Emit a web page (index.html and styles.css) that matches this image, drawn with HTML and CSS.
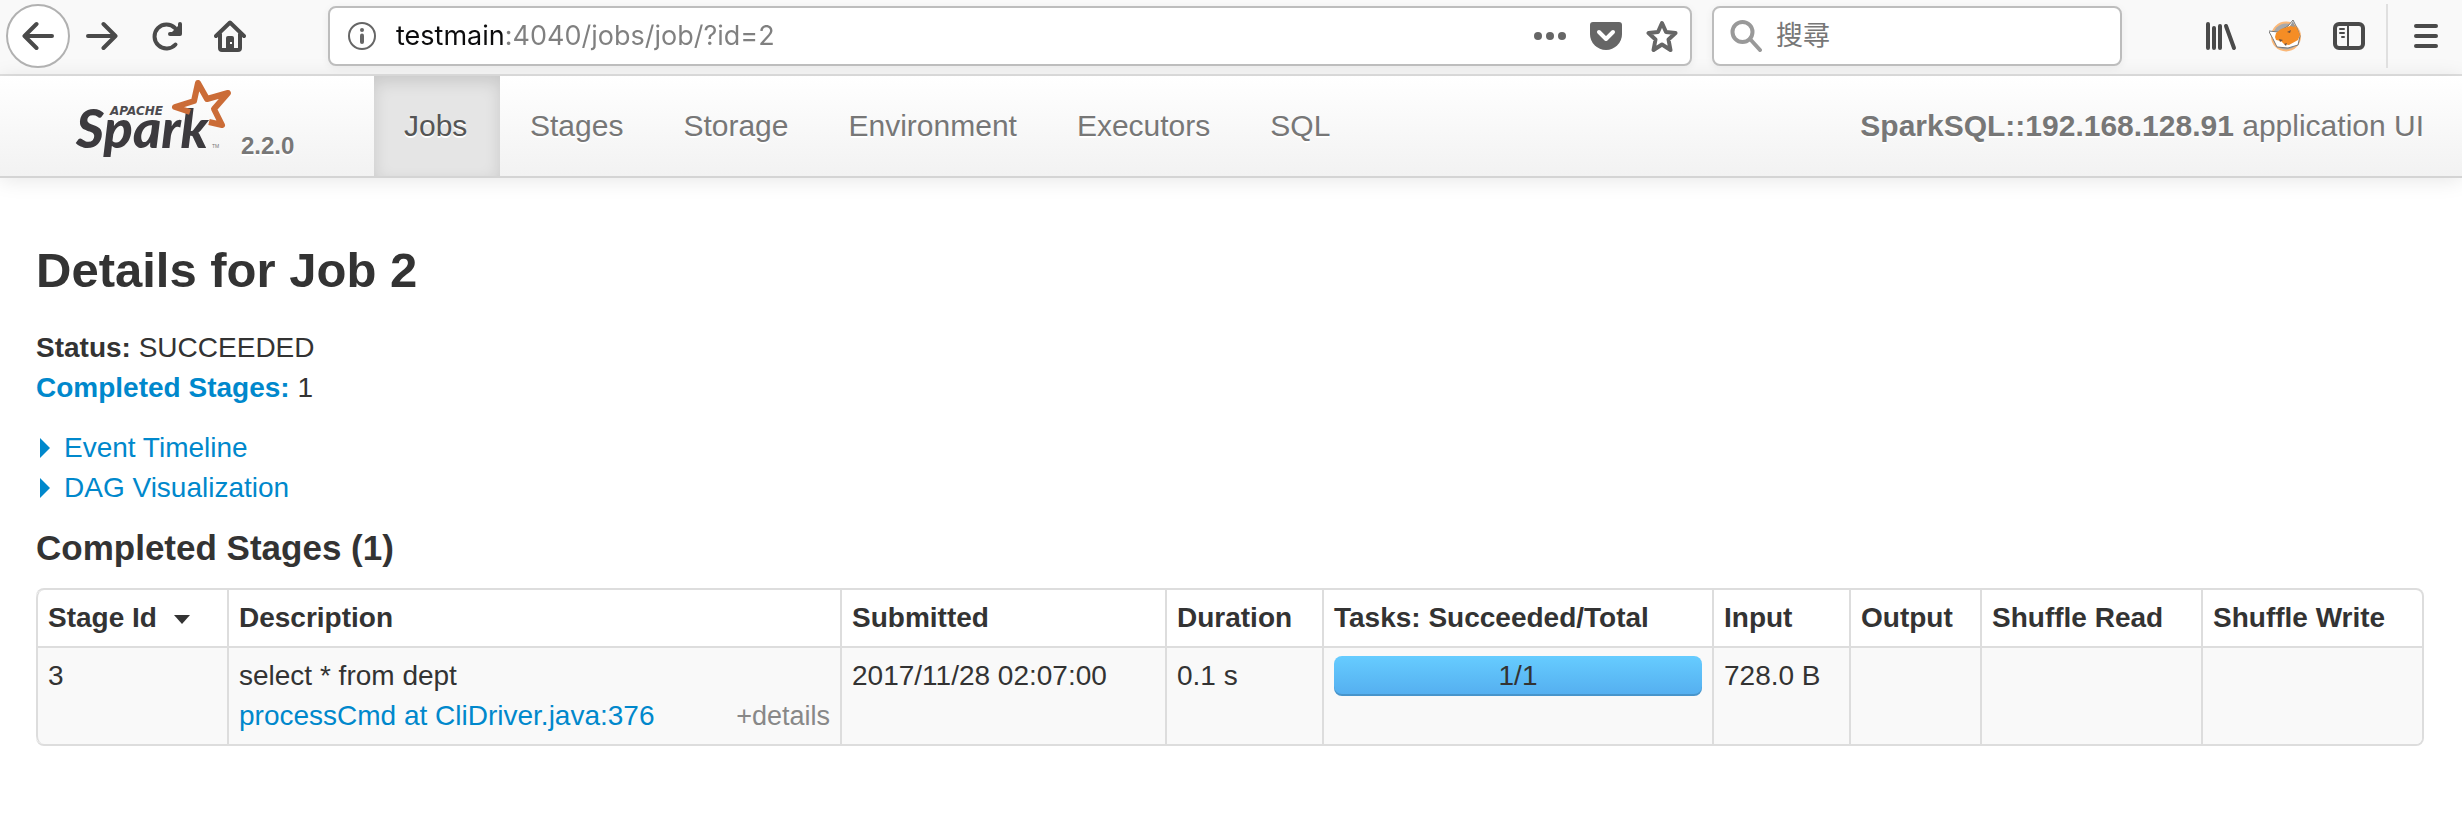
FILE: index.html
```html
<!DOCTYPE html>
<html lang="en">
<head>
<meta charset="utf-8">
<title>Details for Job 2</title>
<link rel="stylesheet" href="styles.css">
</head>
<body>
<header class="toolbar">
  <div class="tool-group">
    <button class="tool back" aria-label="Back"><svg class="icon" viewBox="0 0 32 32"><path d="M14.500 4 2.500 16l12 12M3 16h27"/></svg></button>
    <button class="tool" aria-label="Forward"><svg class="icon" viewBox="0 0 32 32"><path d="M17.500 4l12 12-12 12M29 16H2"/></svg></button>
    <button class="tool" aria-label="Reload"><svg class="icon" viewBox="0 0 32 32"><path d="M25.500 24.500A12 12 0 1 1 25 8"/><path d="M30 4v10H20z" fill="currentColor" stroke="none"/><path d="M30 4v10H20"/></svg></button>
    <button class="tool" aria-label="Home"><svg class="icon" viewBox="0 0 32 32"><path d="M2 16 16 2.500 30 16M6 14v14q0 2 2 2h16q2 0 2-2V14"/><path d="M12 29V18q0-2 2-2h4q2 0 2 2v11z" fill="currentColor" stroke="none"/><path d="M16 22h2v2h-2z" fill="#fff" stroke="none"/></svg></button>
  </div>
  <div class="field address">
    <svg class="icon info" viewBox="0 0 32 32"><circle cx="16" cy="16" r="13" stroke-width="2"/><path d="M16 15.500v6.500"/><circle cx="16" cy="10" r="2" fill="currentColor" stroke="none"/></svg>
    <input class="field-input url" type="text" aria-label="Address" value="testmain:4040/jobs/job/?id=2">
    <button class="mini" aria-label="Page actions"><svg class="icon" viewBox="0 0 32 32"><g fill="currentColor" stroke="none"><circle cx="4" cy="16" r="4"/><circle cx="16" cy="16" r="4"/><circle cx="28" cy="16" r="4"/></g></svg></button>
    <button class="mini" aria-label="Save to Pocket"><svg class="icon" viewBox="0 0 32 32"><path d="M3 2h26q3 0 3 3v9a16 16 0 0 1-32 0V5q0-3 3-3z" fill="currentColor" stroke="none"/><path d="M9 12l7 7 7-7" stroke="#fff"/></svg></button>
    <button class="mini" aria-label="Bookmark"><svg class="icon" viewBox="0 0 32 32"><path d="M16 3l4 9 9.500 1-7 6.500 2 10.500-8.500-5.500L7.500 30l2-10.500-7-6.500 9.500-1z"/></svg></button>
  </div>
  <div class="field search">
    <svg class="icon lens" viewBox="0 0 32 32"><circle cx="12.500" cy="12" r="10"/><path d="M20 19l10 11"/></svg>
    <input class="field-input" type="text" aria-label="搜尋" placeholder="搜尋">
  </div>
  <div class="tool-group">
    <button class="tool" aria-label="Library"><svg class="icon" viewBox="0 0 32 32"><path d="M3 4v24M9 8v20M15 6v22M21 6l8 22"/></svg></button>
    <button class="tool" aria-label="Fox extension"><svg class="icon" viewBox="0 0 32 32"><g stroke="none"><circle cx="17" cy="16.500" r="15" fill="#fbb878"/><circle cx="17" cy="16.500" r="13" fill="#a9a9a9"/><path d="M0 11l9 1 10-6 5-6 4 8 3 8-2 9-10 3-11-1-4-8z" fill="#fff" stroke="#777" stroke-width="1"/><path d="M7 13l5-4 9-3 4-2 3 4 3 7-2 5-9 5-5-1-3-3-5-1-1-3z" fill="#f58d25"/><path d="M10 19l4 1-3 2zM18 12l4-2-1 3zM15 24l3-1-1 3z" fill="#6b5040"/><path d="M21 6l3-5 2 6z" fill="#999"/></g></svg></button>
    <button class="tool" aria-label="Sidebars"><svg class="icon" viewBox="0 0 32 32"><rect x="2" y="4" width="28" height="24" rx="4"/><path d="M15 4v24M7 9h4M7 13h4M9 17h2" stroke-width="2"/></svg></button>
  </div>
  <div class="menu-wrap">
    <button class="tool" aria-label="Menu"><svg class="icon" viewBox="0 0 32 32"><path d="M6 6h20M6 16h20M6 26h20"/></svg></button>
  </div>
</header>

<nav class="navbar">
  <a class="brand" href="#">
    <svg class="logo" viewBox="0 0 160 84" role="img" aria-label="Apache Spark">
      <text class="logo-word" x="2" y="70">Spark</text>
      <text class="logo-apache" x="36" y="37">APACHE</text>
      <text class="logo-tm" x="138" y="70">TM</text>
      <path class="logo-star" d="M116 34l-15-5 19-6 4-18 9 16 21-6-14 16 8 16-13-3"/>
    </svg>
    <span class="version">2.2.0</span>
  </a>
  <ul class="tabs">
    <li><a class="tab active" href="#">Jobs</a></li>
    <li><a class="tab" href="#">Stages</a></li>
    <li><a class="tab" href="#">Storage</a></li>
    <li><a class="tab" href="#">Environment</a></li>
    <li><a class="tab" href="#">Executors</a></li>
    <li><a class="tab" href="#">SQL</a></li>
  </ul>
  <p class="app-name"><strong>SparkSQL::192.168.128.91</strong> application UI</p>
</nav>

<main class="content">
  <h1 class="title">Details for Job 2</h1>
  <ul class="summary">
    <li><strong>Status:</strong> SUCCEEDED</li>
    <li><a href="#completed"><strong>Completed Stages:</strong></a> 1</li>
  </ul>
  <div class="expanders">
    <a class="expander" href="#">Event Timeline</a>
    <a class="expander" href="#">DAG Visualization</a>
  </div>
  <h2 class="subtitle" id="completed">Completed Stages (1)</h2>
  <table class="stages">
    <colgroup>
      <col class="c-id"><col><col class="c-submitted"><col class="c-duration"><col class="c-tasks"><col class="c-input"><col class="c-output"><col class="c-shuffle"><col class="c-shuffle">
    </colgroup>
    <thead>
      <tr><th class="sorted">Stage Id</th><th>Description</th><th>Submitted</th><th>Duration</th><th>Tasks: Succeeded/Total</th><th>Input</th><th>Output</th><th>Shuffle Read</th><th>Shuffle Write</th></tr>
    </thead>
    <tbody>
      <tr>
        <td>3</td>
        <td>select * from dept
          <div class="call"><a href="#">processCmd at CliDriver.java:376</a><button class="details">+details</button></div>
        </td>
        <td>2017/11/28 02:07:00</td>
        <td>0.1 s</td>
        <td><div class="progress">1/1</div></td>
        <td>728.0 B</td>
        <td></td>
        <td></td>
        <td></td>
      </tr>
    </tbody>
  </table>
</main>
</body>
</html>
```
FILE: styles.css
```css
* { box-sizing: border-box; }
body {
  margin: 0;
  background: #fff;
  color: #333;
  font: 28px/40px "Liberation Sans", Arial, sans-serif;
}
a { color: #08c; text-decoration: none; }
ul { margin: 0; padding: 0; list-style: none; }
button { padding: 0; border: 0; background: none; color: inherit; font: inherit; }

/* Browser toolbar */
.toolbar {
  display: flex;
  align-items: center;
  height: 76px;
  padding: 0 4px 2px 6px;
  background: #f9f9f9;
  border-bottom: 2px solid #e0e0e0;
  color: #4a4a4a;
}
.tool-group { display: flex; }
.tool {
  display: flex;
  align-items: center;
  justify-content: center;
  width: 64px;
  height: 64px;
}
.back { background: #fff; border: 2px solid #b1b1b1; border-radius: 50%; }
.icon {
  flex: none;
  width: 32px;
  height: 32px;
  fill: none;
  stroke: currentColor;
  stroke-width: 4;
  stroke-linecap: round;
  stroke-linejoin: round;
}
.field {
  display: flex;
  align-items: center;
  height: 60px;
  background: #fff;
  border: 2px solid #bdbdbd;
  border-radius: 8px;
  box-shadow: 0 2px 8px rgba(0, 0, 0, .06);
  color: #666;
}
.address { flex: 1; gap: 24px; margin-left: 66px; padding: 0 12px 0 16px; }
.search { width: 410px; margin: 0 67px 0 20px; padding: 0 16px; gap: 14px; }
.info { margin-right: -6px; }
.lens { color: #999; }
.mini { display: flex; color: #666; }
.field-input {
  flex: 1;
  min-width: 0;
  padding: 0;
  border: 0;
  outline: 0;
  background: none;
  font: 27px/40px Inter, "Noto Sans CJK TC", sans-serif;
}
.field-input::placeholder { color: #777; }
.url {
  color: transparent;
  background: linear-gradient(90deg, #0c0c0d 111px, #808080 111px);
  background-clip: text;
  -webkit-background-clip: text;
}
.menu-wrap { margin-left: 5px; padding-left: 6px; border-left: 2px solid #e0e0e0; }

/* Application navigation */
.navbar {
  display: flex;
  height: 102px;
  padding-right: 38px;
  background: linear-gradient(#fff, #f2f2f2);
  border-bottom: 2px solid #d4d4d4;
  box-shadow: 0 2px 20px rgba(0, 0, 0, .1);
  color: #777;
  font-size: 30px;
  text-shadow: 0 2px 0 #fff;
}
.brand { display: flex; width: 374px; padding-left: 74px; color: #777; }
.logo { width: 160px; height: 84px; margin-top: 2px; text-shadow: none; }
.logo-word { font: italic 900 54px Lato, sans-serif; fill: #3c3a3e; }
.logo-apache { font: italic bold 12px "DejaVu Sans", sans-serif; fill: #4c4a4e; }
.logo-tm { font: 5px "Liberation Sans", sans-serif; fill: #777; }
.logo-star {
  fill: none;
  stroke: #cb6c37;
  stroke-width: 6;
  stroke-linejoin: round;
}
.version { margin: 50px 0 0 7px; font-size: 24px; font-weight: bold; }
.tabs { display: flex; }
.tab { display: block; min-width: 126px; height: 100px; padding: 30px; color: #777; }
.active {
  background: #e5e5e5;
  box-shadow: inset 0 6px 16px rgba(0, 0, 0, .125);
  color: #555;
}
.app-name { margin: 0 0 0 auto; padding: 30px 0; }

/* Page content */
.content { padding: 52px 38px 40px 36px; }
.title { margin: 0 0 18px; font-size: 49px; line-height: 80px; }
.expanders { display: flex; flex-direction: column; align-items: flex-start; margin-top: 20px; }
.expander { display: flex; align-items: center; gap: 14px; padding-left: 4px; }
.expander::before {
  content: "";
  border: 10px solid transparent;
  border-left-color: currentColor;
  border-right-width: 0;
}
.subtitle { margin: 20px 0; font-size: 35px; line-height: 40px; }
.stages {
  width: 100%;
  table-layout: fixed;
  border: 2px solid #ddd;
  border-left: 0;
  border-radius: 8px;
  border-spacing: 0;
}
.c-id { width: 191px; }
.c-submitted { width: 325px; }
.c-duration { width: 157px; }
.c-tasks { width: 390px; }
.c-input { width: 137px; }
.c-output { width: 131px; }
.c-shuffle { width: 221px; }
th, td {
  padding: 8px 10px;
  border-left: 2px solid #ddd;
  text-align: left;
  vertical-align: top;
  white-space: nowrap;
}
td { background: #f9f9f9; border-top: 2px solid #ddd; }
th:first-child { border-top-left-radius: 8px; }
td:first-child { border-bottom-left-radius: 8px; }
td:last-child { border-bottom-right-radius: 6px; }
.sorted::after {
  content: "";
  display: inline-block;
  margin-left: 17px;
  border: 8px solid transparent;
  border-top: 9px solid currentColor;
  border-bottom: 0;
  vertical-align: 3px;
}
.call { display: flex; justify-content: space-between; }
.details { color: #888; font-size: 27px; }
.progress {
  height: 40px;
  border-radius: 8px;
  background: linear-gradient(#66ccff, #54aeef);
  box-shadow: inset 0 -2px 0 rgba(0, 0, 0, .15);
  text-align: center;
}
```
